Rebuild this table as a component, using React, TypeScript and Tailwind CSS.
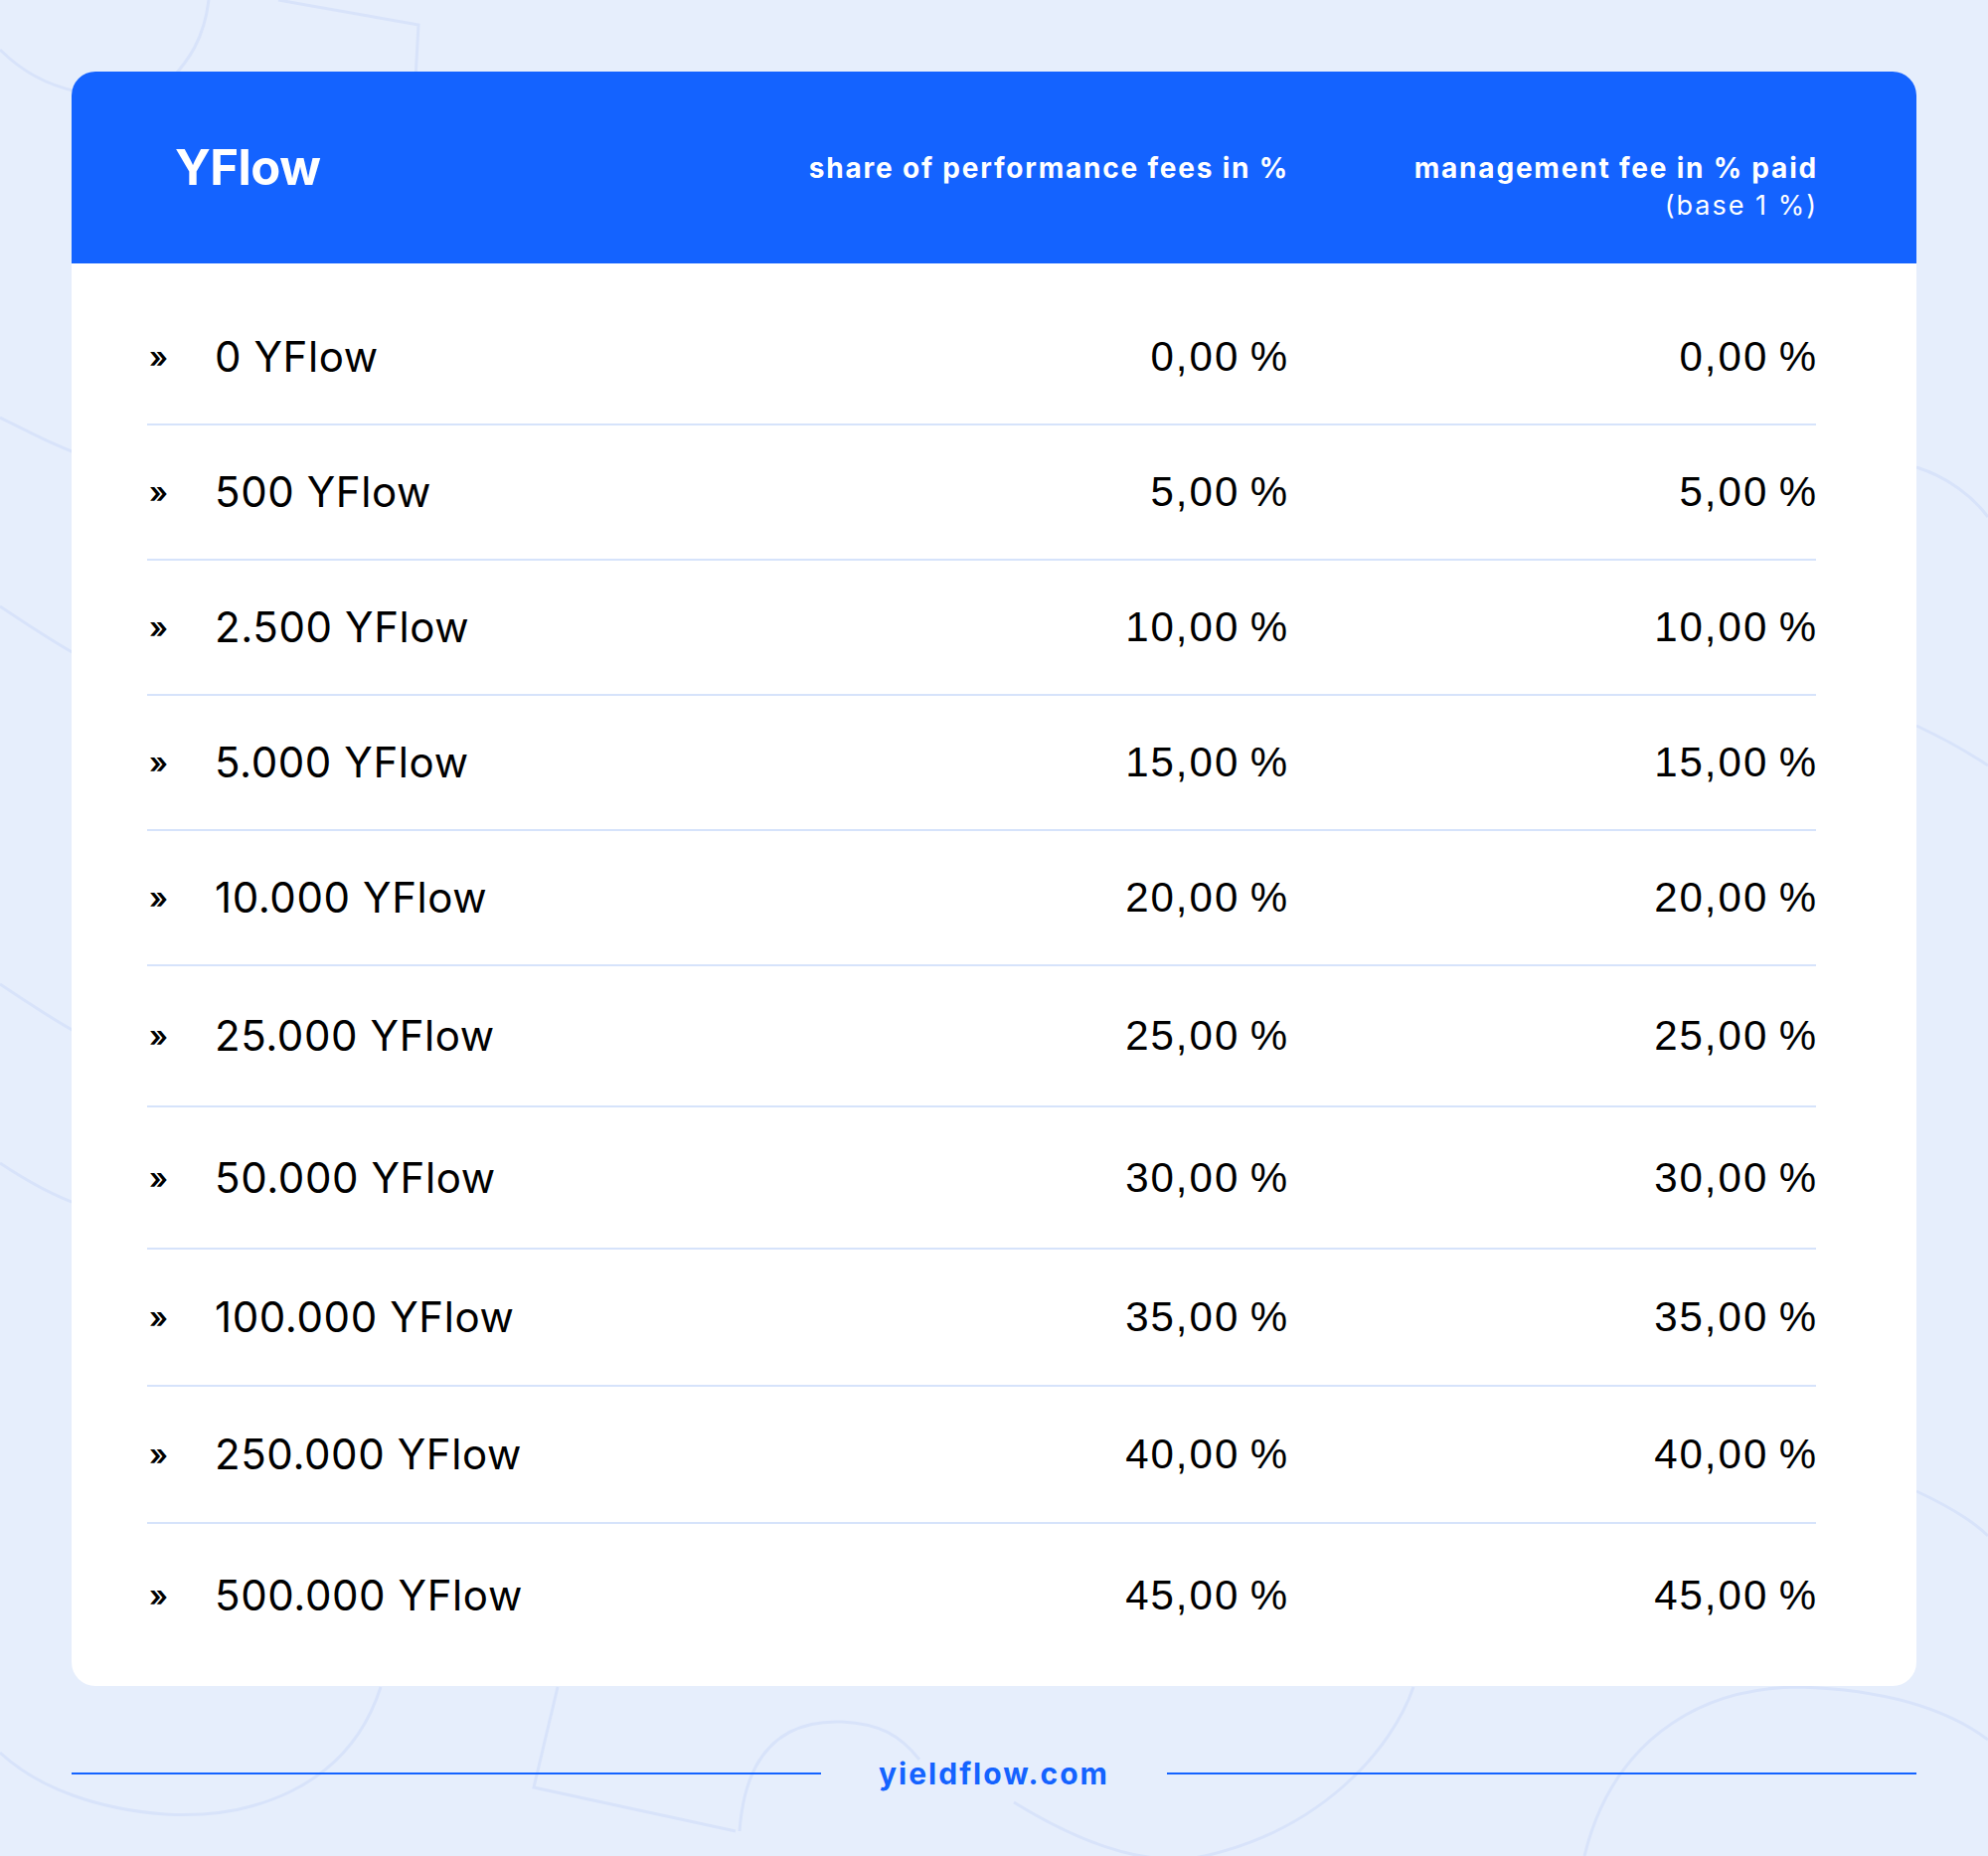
import React from "react";

const rows = [
  { amount: "0 YFlow", perf: "0,00\u2009%", mgmt: "0,00\u2009%", h: "h-[136px]" },
  { amount: "500 YFlow", perf: "5,00\u2009%", mgmt: "5,00\u2009%", h: "h-[136px]" },
  { amount: "2.500 YFlow", perf: "10,00\u2009%", mgmt: "10,00\u2009%", h: "h-[136px]" },
  { amount: "5.000 YFlow", perf: "15,00\u2009%", mgmt: "15,00\u2009%", h: "h-[136px]" },
  { amount: "10.000 YFlow", perf: "20,00\u2009%", mgmt: "20,00\u2009%", h: "h-[136px]" },
  { amount: "25.000 YFlow", perf: "25,00\u2009%", mgmt: "25,00\u2009%", h: "h-[142px]" },
  { amount: "50.000 YFlow", perf: "30,00\u2009%", mgmt: "30,00\u2009%", h: "h-[143px]" },
  { amount: "100.000 YFlow", perf: "35,00\u2009%", mgmt: "35,00\u2009%", h: "h-[138px]" },
  { amount: "250.000 YFlow", perf: "40,00\u2009%", mgmt: "40,00\u2009%", h: "h-[138px]" },
  { amount: "500.000 YFlow", perf: "45,00\u2009%", mgmt: "45,00\u2009%", h: "h-[144px]" },
];

function BackgroundLines() {
  return (
    <svg
      className="pointer-events-none absolute inset-0 h-full w-full"
      viewBox="0 0 2000 1867"
      fill="none"
      stroke="#d8e3fa"
      strokeWidth="3"
    >
      <path d="M210 0 C205 40 190 60 172 80" />
      <path d="M280 0 L421 25 L418 80" />
      <path d="M0 50 C20 70 45 85 77 92" />
      <path d="M0 420 C40 440 70 455 90 460" />
      <path d="M0 610 C30 630 60 650 80 660" />
      <path d="M0 990 C30 1010 60 1030 80 1040" />
      <path d="M0 1170 C30 1190 60 1205 80 1212" />
      <path d="M1928 470 C1960 480 1985 500 2000 520" />
      <path d="M1928 730 C1960 745 1985 760 2000 770" />
      <path d="M1928 1500 C1960 1515 1985 1530 2000 1545" />
      <path d="M383 1697 C350 1800 250 1830 166 1825 C100 1820 40 1800 0 1763" />
      <path d="M561 1697 L537 1798 L740 1842" />
      <path d="M744 1842 C750 1760 790 1730 847 1732 C885 1734 905 1745 925 1770" />
      <path d="M1020 1813 C1080 1850 1150 1880 1212 1867 C1330 1840 1400 1760 1422 1697" />
      <path d="M1594 1867 C1620 1760 1700 1697 1811 1697 C1900 1700 1960 1720 2000 1750" />
    </svg>
  );
}

export default function App() {
  return (
    <div className="relative min-h-[1867px] w-full overflow-hidden bg-[#e6eefc] px-[72px] pt-[72px] font-['Inter',sans-serif]">
      <BackgroundLines />

      <div className="relative overflow-hidden rounded-[24px] bg-white">
        <div className="grid h-[193px] grid-cols-[1fr_600px_532px] items-start bg-[#1463ff] pl-[104px] pr-[101px] text-white">
          <div className="self-center text-[49px] font-bold leading-none tracking-[-0.5px]">YFlow</div>
          <div className="mt-[79px] -mr-[2px] text-right text-[28px] font-bold leading-[37px] tracking-[1.8px]">
            share of performance fees in %
          </div>
          <div className="mt-[79px] -mr-[2px] text-right leading-[37px]">
            <div className="text-[28px] font-bold tracking-[1.8px]">management fee in % paid</div>
            <div className="text-[27px] font-normal tracking-[2px]">(base 1 %)</div>
          </div>
        </div>

        <div className="ml-[76px] mr-[101px] pt-[27px] pb-[19px]">
          {rows.map((r, i) => (
            <div
              key={r.amount}
              className={`grid grid-cols-[1fr_600px_532px] items-center ${r.h} ${
                i < rows.length - 1 ? "border-b-2 border-[#d6e3fb]" : ""
              }`}
            >
              <div className="flex items-center text-black">
                <span className="w-[68px] pl-[2px] text-[30px] font-semibold leading-none">»</span>
                <span className="text-[42px] font-normal leading-none tracking-[0.6px]">{r.amount}</span>
              </div>
              <div className="-mr-[2px] text-right font-['Liberation_Sans',Arial,sans-serif] text-[42px] leading-none tracking-[2px] text-black">
                {r.perf}
              </div>
              <div className="-mr-[2px] text-right font-['Liberation_Sans',Arial,sans-serif] text-[42px] leading-none tracking-[2px] text-black">
                {r.mgmt}
              </div>
            </div>
          ))}
        </div>
      </div>

      <div className="relative mt-[68px] flex h-[40px] items-center gap-[58px]">
        <div className="h-[2px] flex-1 bg-[#1463ff]" />
        <div className="text-[30px] font-bold leading-none tracking-[2px] text-[#1463ff]">yieldflow.com</div>
        <div className="h-[2px] flex-1 bg-[#1463ff]" />
      </div>
    </div>
  );
}
